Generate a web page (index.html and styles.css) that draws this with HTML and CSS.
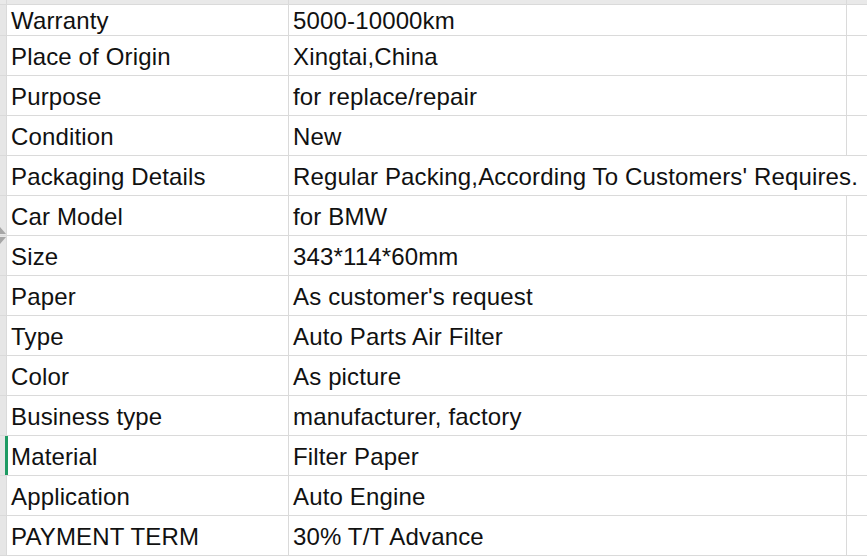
FILE: index.html
```html
<!DOCTYPE html>
<html lang="en">
<head>
    <meta charset="UTF-8">
    <title>Product specifications</title>
    <link rel="stylesheet" href="styles.css">
</head>
<body>

    <div class="sheet">
        <div class="head"></div><div class="head"></div><div class="head"></div><div class="head"></div>

        <div class="gutter"></div><div class="cell">Warranty</div><div class="cell">5000-10000km</div><div class="cell"></div>
        <div class="gutter"></div><div class="cell">Place of Origin</div><div class="cell">Xingtai,China</div><div class="cell"></div>
        <div class="gutter"></div><div class="cell">Purpose</div><div class="cell">for replace/repair</div><div class="cell"></div>
        <div class="gutter"></div><div class="cell">Condition</div><div class="cell">New</div><div class="cell"></div>
        <!-- long value spills into the next column, as in the sheet -->
        <div class="gutter"></div><div class="cell">Packaging Details</div><div class="cell spill">Regular Packing,According To Customers' Requires.</div>
        <div class="gutter"></div><div class="cell">Car Model</div><div class="cell">for BMW</div><div class="cell"></div>
        <div class="gutter"></div><div class="cell">Size</div><div class="cell">343*114*60mm</div><div class="cell"></div>
        <div class="gutter"></div><div class="cell">Paper</div><div class="cell">As customer's request</div><div class="cell"></div>
        <div class="gutter"></div><div class="cell">Type</div><div class="cell">Auto Parts Air Filter</div><div class="cell"></div>
        <div class="gutter"></div><div class="cell">Color</div><div class="cell">As picture</div><div class="cell"></div>
        <div class="gutter"></div><div class="cell">Business type</div><div class="cell">manufacturer, factory</div><div class="cell"></div>
        <div class="gutter selected"></div><div class="cell">Material</div><div class="cell">Filter Paper</div><div class="cell"></div>
        <div class="gutter"></div><div class="cell">Application</div><div class="cell">Auto Engine</div><div class="cell"></div>
        <div class="gutter"></div><div class="cell">PAYMENT TERM</div><div class="cell">30% T/T Advance</div><div class="cell"></div>

        <!-- row resize handle -->
        <svg class="handle" width="6" height="22" viewBox="0 0 6 22">
            <polygon points="0,2 6,9 0,9" fill="#a6a6a6"/>
            <polygon points="0,12 6,12 0,19" fill="#a6a6a6"/>
        </svg>
    </div>

</body>
</html>
```

FILE: styles.css
```css
body {
    margin: 0;
    background-color: #ffffff;
    font-family: "Liberation Sans", Arial, sans-serif;
    overflow: hidden;
}
.sheet {
    position: relative;
    display: grid;
    grid-template-columns: 6px 281px 557px 1fr;
    grid-template-rows: 4px 30px repeat(13, 39px);
    gap: 1px;
    background-color: #dadada;
    padding-bottom: 1px;
}
.head {
    background-color: #e9e9e9;
}
.gutter {
    background-color: #e6e6e6;
}
.gutter.selected {
    position: relative;
}
.gutter.selected::after {
    content: "";
    position: absolute;
    top: 0;
    right: -2px;
    width: 3px;
    height: 100%;
    background-color: #1e9b63;
}
.cell {
    background-color: #ffffff;
    display: flex;
    align-items: center;
    padding: 2px 0 0 4px;
    font-size: 24px;
    letter-spacing: 0.15px;
    color: #111111;
    white-space: nowrap;
    overflow: hidden;
}
.cell.spill {
    grid-column: span 2;
}
.handle {
    position: absolute;
    left: 0;
    top: 225px;
}
```
